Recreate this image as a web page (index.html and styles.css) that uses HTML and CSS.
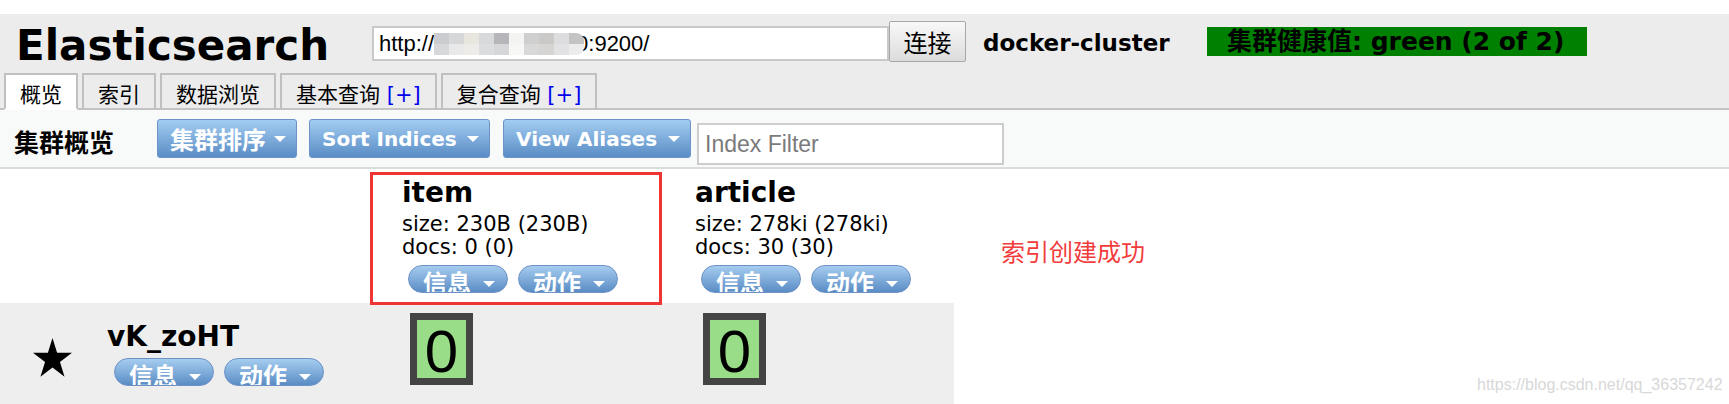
FILE: index.html
```html
<!DOCTYPE html>
<html lang="zh-CN">
<head>
    <meta charset="UTF-8">
    <title>Elasticsearch Head</title>
    <link rel="stylesheet" href="styles.css">
</head>
<body>
    <div class="topbar"></div>
    <div class="header">
        <div class="header-row">
            <h1 class="logo">Elasticsearch</h1>
            <div class="url-box">http://<span class="blur"></span>0:9200/</div>
            <button class="connect">连接</button>
            <span class="cluster-name">docker-cluster</span>
            <span class="health">集群健康值: green (2 of 2)</span>
        </div>
        <ul class="tabs">
            <li class="tab active">概览</li>
            <li class="tab">索引</li>
            <li class="tab">数据浏览</li>
            <li class="tab">基本查询 <span class="plus">[+]</span></li>
            <li class="tab">复合查询 <span class="plus">[+]</span></li>
        </ul>
    </div>

    <div class="toolbar">
        <span class="toolbar-title">集群概览</span>
        <button class="menu-btn sort-cluster">集群排序<i class="caret"></i></button>
        <button class="menu-btn sort-indices">Sort Indices<i class="caret"></i></button>
        <button class="menu-btn view-aliases">View Aliases<i class="caret"></i></button>
        <input class="index-filter" type="text" placeholder="Index Filter">
    </div>

    <div class="overview">
        <div class="corner"></div>
        <div class="index-head">
            <div class="index-name">item</div>
            <div class="index-stat">size: 230B (230B)</div>
            <div class="index-stat">docs: 0 (0)</div>
            <div class="pills">
                <span class="pill">信息<i class="caret"></i></span>
                <span class="pill">动作<i class="caret"></i></span>
            </div>
        </div>
        <div class="index-head">
            <div class="index-name">article</div>
            <div class="index-stat">size: 278ki (278ki)</div>
            <div class="index-stat">docs: 30 (30)</div>
            <div class="pills">
                <span class="pill">信息<i class="caret"></i></span>
                <span class="pill">动作<i class="caret"></i></span>
            </div>
        </div>

        <div class="node-cell">
            <svg class="star" viewBox="0 0 100 91" preserveAspectRatio="none">
                <polygon points="50,0 61.23,34.55 97.55,34.55 68.17,55.9 79.39,90.45 50,69.1 20.61,90.45 31.83,55.9 2.45,34.55 38.77,34.55" fill="#000"/>
            </svg>
            <div class="node-info">
                <div class="node-name">vK_zoHT</div>
                <div class="pills">
                    <span class="pill">信息<i class="caret"></i></span>
                    <span class="pill">动作<i class="caret"></i></span>
                </div>
            </div>
        </div>
        <div class="shard-cell"><div class="shard">0</div></div>
        <div class="shard-cell"><div class="shard">0</div></div>

        <div class="highlight"></div>
        <div class="note">索引创建成功</div>
    </div>

    <div class="watermark">https://blog.csdn.net/qq_36357242</div>
</body>
</html>
```

FILE: styles.css
```css
body {
    margin: 0;
    position: relative;
    font-family: "DejaVu Sans", "Noto Sans CJK SC", sans-serif;
    color: #000;
    background: #fff;
}

.topbar {
    height: 14px;
    background: #fff;
}

/* header: logo, connection, cluster health */
.header {
    background: #ececec;
    border-bottom: 2px solid #c3c3c3;
}

.header-row {
    display: flex;
    align-items: center;
    height: 59px;
    padding-left: 16px;
}

.logo {
    margin: 4px 0 0;
    width: 356px;
    flex: none;
    font-size: 42px;
    line-height: 42px;
    font-weight: bold;
}

.url-box {
    box-sizing: border-box;
    display: flex;
    align-items: center;
    width: 517px;
    height: 35px;
    padding-left: 5px;
    border: 2px solid #c9c9c9;
    background: #fff;
    font: 22px "Liberation Sans", Arial, sans-serif;
}

.blur {
    display: inline-block;
    position: relative;
    z-index: 1;
    width: 150px;
    height: 22px;
    margin-right: -8px;
    border-radius: 0 8px 8px 0;
    background:
        linear-gradient(to right, #cbccd0 0 15px, #d6d7d9 15px 30px, #e9e6e0 30px 45px, #d8d9db 45px 60px, #b6b5ba 60px 75px, #f4f4f2 75px 90px, #cfcfcf 90px 105px, #cbc9c7 105px 120px, #dddde0 120px 135px, #c4c4c4 135px 150px) top / 100% 50% no-repeat,
        linear-gradient(to right, #d7d8da 0 15px, #e9e9e9 15px 30px, #eeece8 30px 45px, #dcdddf 45px 60px, #d6d7d9 60px 75px, #f7f7f5 75px 90px, #d8d8d8 90px 105px, #d6d5d3 105px 120px, #e2e2e4 120px 135px, #ececec 135px 150px) bottom / 100% 50% no-repeat;
}

.connect {
    box-sizing: border-box;
    width: 77px;
    height: 41px;
    margin: 0 0 4px;
    padding: 0;
    border: 1px solid #a7a7a7;
    border-radius: 2px;
    background: linear-gradient(#f8f8f8, #dcdcdc);
    color: #000;
    font: 24px "Noto Sans CJK SC", sans-serif;
}

.cluster-name {
    width: 224px;
    margin-left: 17px;
    flex: none;
    font-size: 23px;
    font-weight: bold;
    line-height: 29px;
}

.health {
    box-sizing: border-box;
    width: 380px;
    height: 29px;
    margin-bottom: 4px;
    padding-left: 20px;
    overflow: hidden;
    white-space: nowrap;
    background: #008000;
    font-size: 25px;
    font-weight: bold;
    line-height: 29px;
}

.tabs {
    display: flex;
    gap: 4px;
    list-style: none;
    margin: 0 0 -2px;
    padding: 0 0 0 4px;
}

.tab {
    box-sizing: border-box;
    height: 37px;
    padding: 10px 14px 0;
    border: 2px solid #c0c0c0;
    border-bottom-color: #c3c3c3;
    background: #ececec;
    font-size: 21px;
    line-height: 21px;
    white-space: nowrap;
}

.tab.active {
    background: #fff;
    border-bottom-color: #fff;
}

.plus {
    color: #0000ee;
}

/* toolbar */
.toolbar {
    display: flex;
    align-items: center;
    height: 57px;
    background: #f8f9f9;
    border-bottom: 2px solid #dcdcdc;
}

.toolbar-title {
    box-sizing: border-box;
    width: 157px;
    margin-top: 4px;
    padding-left: 14px;
    font: bold 25px "Noto Sans CJK SC", sans-serif;
}

.menu-btn {
    box-sizing: border-box;
    display: flex;
    align-items: center;
    justify-content: space-between;
    height: 39px;
    padding: 0 10px 0 12px;
    border: 1px solid #6b93c8;
    border-radius: 3px;
    background: linear-gradient(#a2ccf1, #5a8dc6);
    color: #fff;
    font-family: "DejaVu Sans", "Noto Sans CJK SC", sans-serif;
    font-size: 20px;
    font-weight: bold;
    white-space: nowrap;
}

.sort-cluster {
    width: 140px;
    margin-right: 12px;
    font-size: 24px;
}

.sort-indices {
    width: 181px;
    margin-right: 13px;
}

.view-aliases {
    width: 188px;
    margin-right: 6px;
}

.caret {
    width: 0;
    height: 0;
    border-left: 6px solid transparent;
    border-right: 6px solid transparent;
    border-top: 6px solid #fff;
}

.index-filter {
    box-sizing: border-box;
    width: 307px;
    height: 42px;
    margin-top: 11px;
    padding: 0 6px;
    border: 2px solid #cdcdcd;
    background: #fff;
    font: 23px "Liberation Sans", Arial, sans-serif;
}

.index-filter::placeholder {
    color: #7a7a7a;
}

/* cluster overview table */
.overview {
    position: relative;
    display: grid;
    grid-template-columns: 402px 293px 259px;
}

.index-head {
    padding: 10px 0;
}

.index-name {
    margin-bottom: 6px;
    font-size: 28px;
    font-weight: bold;
    line-height: 28px;
}

.index-stat {
    font-size: 21px;
    line-height: 23px;
}

.pills {
    display: flex;
    gap: 10px;
    margin: 6px 0 0 6px;
}

.pill {
    box-sizing: border-box;
    display: flex;
    align-items: flex-start;
    justify-content: space-between;
    width: 100px;
    height: 28px;
    padding: 3px 12px 0 14px;
    overflow: hidden;
    border: 1px solid #6d92c6;
    border-radius: 14px;
    background: linear-gradient(#a6cdf0, #5a8cc4);
    color: #fff;
    font: bold 24px "Noto Sans CJK SC", sans-serif;
    line-height: 26px;
}

.pill .caret {
    margin-top: 12px;
}

.node-cell {
    display: flex;
    height: 101px;
    padding-left: 32px;
    background: #eeeeee;
}

.star {
    width: 41px;
    height: 39px;
    margin-top: 35px;
    flex: none;
}

.node-info {
    margin-left: 34px;
    padding-top: 19px;
}

.node-name {
    margin-bottom: 6px;
    font-size: 28px;
    font-weight: bold;
    line-height: 30px;
}

.node-info .pills {
    margin: 0 0 0 7px;
}

.shard-cell {
    padding: 10px 0 0 8px;
    background: #eeeeee;
}

.shard {
    width: 49px;
    height: 58px;
    overflow: hidden;
    border: 7px solid #444;
    background: #99dd88;
    font: 60px "Liberation Sans", Arial, sans-serif;
    line-height: 64px;
    text-align: center;
}

/* annotations on the screenshot */
.highlight {
    position: absolute;
    left: 370px;
    top: 3px;
    box-sizing: border-box;
    width: 292px;
    height: 133px;
    border: 3px solid #f03434;
}

.note {
    position: absolute;
    left: 1001px;
    top: 70px;
    color: #f23c3c;
    font: 24px "Noto Sans CJK SC", sans-serif;
    line-height: 24px;
}

.watermark {
    position: absolute;
    left: 1477px;
    top: 376px;
    color: #d8d8d8;
    font: 16px "Liberation Sans", Arial, sans-serif;
    line-height: 18px;
}
```
